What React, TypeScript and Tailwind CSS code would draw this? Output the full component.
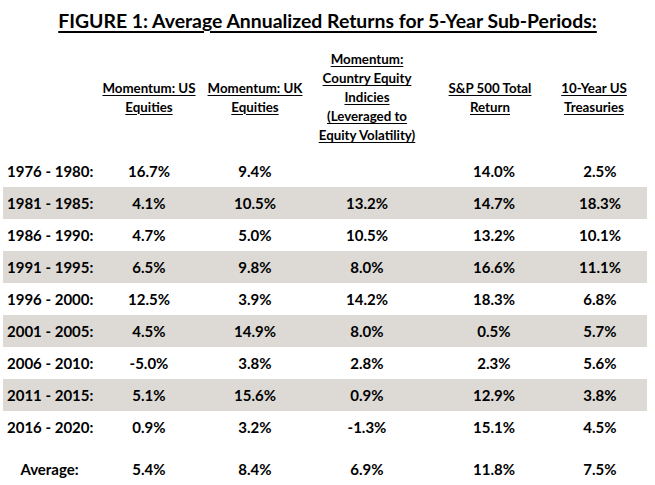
import React from "react";

const ROWS = [
  ["1976 - 1980:", "16.7%", "9.4%", "", "14.0%", "2.5%"],
  ["1981 - 1985:", "4.1%", "10.5%", "13.2%", "14.7%", "18.3%"],
  ["1986 - 1990:", "4.7%", "5.0%", "10.5%", "13.2%", "10.1%"],
  ["1991 - 1995:", "6.5%", "9.8%", "8.0%", "16.6%", "11.1%"],
  ["1996 - 2000:", "12.5%", "3.9%", "14.2%", "18.3%", "6.8%"],
  ["2001 - 2005:", "4.5%", "14.9%", "8.0%", "0.5%", "5.7%"],
  ["2006 - 2010:", "-5.0%", "3.8%", "2.8%", "2.3%", "5.6%"],
  ["2011 - 2015:", "5.1%", "15.6%", "0.9%", "12.9%", "3.8%"],
  ["2016 - 2020:", "0.9%", "3.2%", "-1.3%", "15.1%", "4.5%"],
];

const AVERAGE = ["5.4%", "8.4%", "6.9%", "11.8%", "7.5%"];

const HEADERS = [
  { lines: ["Momentum: US", "Equities"], shift: "" },
  { lines: ["Momentum: UK", "Equities"], shift: "" },
  {
    lines: ["Momentum:", "Country Equity", "Indicies", "(Leveraged to", "Equity Volatility)"],
    shift: "",
  },
  { lines: ["S&P 500 Total", "Return"], shift: "pr-[8px]" },
  { lines: ["10-Year US", "Treasuries"], shift: "pr-[12px]" },
];

const GRID = "grid grid-cols-[93px_106px_106px_118px_136px_76px_9px]";

function Cell({ value }: { value: string }) {
  return <div className="flex justify-center whitespace-nowrap">{value}</div>;
}

export default function App() {
  return (
    <div className="w-[655px] h-[485px] overflow-hidden bg-white text-black font-['Lato',sans-serif] font-bold">
      <h1 className="pt-[9px] text-center text-[19.4px] leading-[24px] underline decoration-2 underline-offset-[3px]">
        FIGURE 1: Average Annualized Returns for 5-Year Sub-Periods:
      </h1>

      {/* Column headers */}
      <div className={`${GRID} ml-[3px] mt-[17px] h-[95px] text-[13.3px] leading-[19px]`}>
        <div />
        {HEADERS.map((h, i) => (
          <div key={i} className={`flex flex-col items-center justify-center whitespace-nowrap ${h.shift}`}>
            {h.lines.map((line) => (
              <span key={line} className="underline decoration-1 underline-offset-[2px]">
                {line}
              </span>
            ))}
          </div>
        ))}
        <div />
      </div>

      {/* Sub-period rows */}
      <div className="ml-[3px] mt-[10px] w-[644px] text-[15px]">
        {ROWS.map((row, i) => (
          <div
            key={row[0]}
            className={`${GRID} h-[32px] items-center ${i % 2 === 1 ? "bg-[#dddad5]" : ""}`}
          >
            <div className="pl-[4px] whitespace-nowrap">{row[0]}</div>
            {row.slice(1).map((v, j) => (
              <Cell key={j} value={v} />
            ))}
            <div />
          </div>
        ))}

        <div className={`${GRID} mt-[10px] h-[32px] items-center`}>
          <div className="text-center">Average:</div>
          {AVERAGE.map((v, j) => (
            <Cell key={j} value={v} />
          ))}
          <div />
        </div>
      </div>
    </div>
  );
}
